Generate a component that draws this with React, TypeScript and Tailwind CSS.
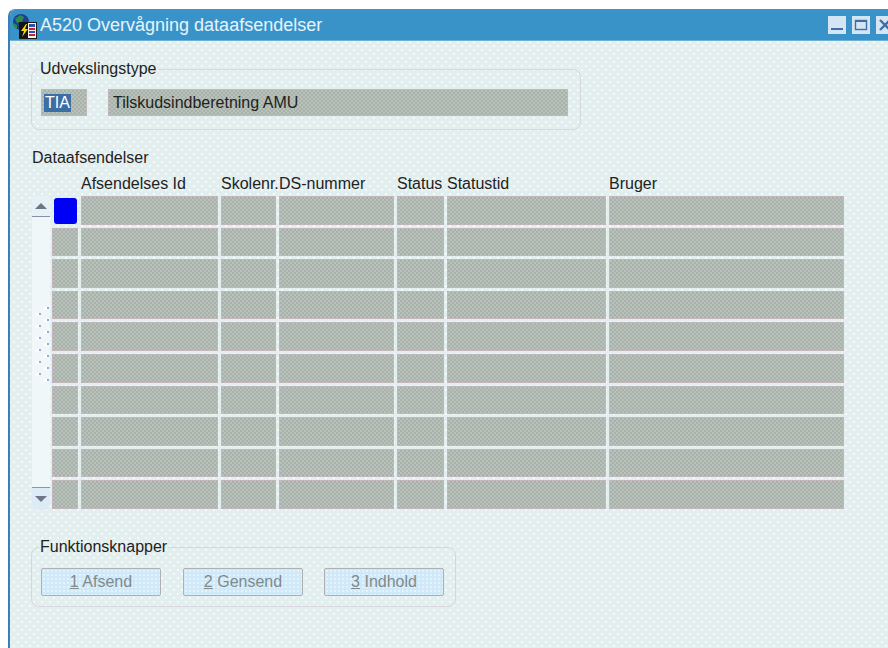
import React from 'react';

const ROWS = Array.from({ length: 10 }, (_, i) => i);
const COLS = [0, 1, 2, 3, 4, 5, 6];

const HEADERS = [
  { label: 'Afsendelses Id', col: 'col-start-2' },
  { label: 'Skolenr.', col: 'col-start-3' },
  { label: 'DS-nummer', col: 'col-start-4' },
  { label: 'Status', col: 'col-start-5' },
  { label: 'Statustid', col: 'col-start-6' },
  { label: 'Bruger', col: 'col-start-7' },
];

const BUTTONS = [
  { key: '1', label: ' Afsend' },
  { key: '2', label: ' Gensend' },
  { key: '3', label: ' Indhold' },
];

const gridCols = 'grid grid-cols-[26px_137px_55px_115px_47px_159px_235px] gap-x-[3px]';
const cellBg =
  'border border-[#c0b6bc] bg-[#b0b9b3] bg-[repeating-conic-gradient(#a6b2b0_0_25%,#bbc1b4_0_50%)] bg-[length:4px_4px]';
const groupBox = 'rounded-[8px] border border-[#d6d6dc]';

function AppIcon() {
  return (
    <svg width="25" height="25" viewBox="0 0 25 25" className="shrink-0 mt-[2px]">
      <circle cx="9" cy="8" r="8" fill="#1c3f8f" />
      <path d="M3 5 L8 1 L12 3 L10 8 L5 9 Z" fill="#2f8a4a" />
      <path d="M1 9 L5 11 L5 15 L2 13 Z" fill="#2f8a4a" />
      <rect x="7.5" y="8.5" width="17" height="16" fill="#f4f4f4" stroke="#1a1a1a" />
      <rect x="7" y="8" width="9" height="16" fill="#141414" />
      <rect x="17" y="10" width="6" height="3" fill="#2a50b0" />
      <rect x="17" y="14" width="6" height="2" fill="#c8202a" />
      <rect x="17" y="17" width="6" height="2" fill="#2a50b0" />
      <rect x="17" y="20" width="6" height="2" fill="#c8202a" />
      <path d="M14 10 L9 17 L12 17 L10 23 L16 15 L13 15 L15 10 Z" fill="#f6d80e" />
    </svg>
  );
}

function WindowButton({ children }: { children: React.ReactNode }) {
  return (
    <div className="w-[18px] h-[18px] shrink-0 bg-[#d4e6f4] flex items-center justify-center">
      <svg width="14" height="14" viewBox="0 0 14 14">
        {children}
      </svg>
    </div>
  );
}

function ScrollGrip() {
  const right = [0, 12, 24, 36, 48, 60, 72];
  const left = [6, 18, 30, 42, 54, 66];
  const pair = (x: number, y: number) => (
    <g key={`${x}-${y}`}>
      <rect x={x - 1} y={y + 1} width="3" height="3" fill="#fff" />
      <rect x={x + 2} y={y + 1} width="2" height="2" fill="#9fa5e2" />
    </g>
  );
  return (
    <svg width="18" height="80" viewBox="0 0 18 80">
      {right.map((y) => pair(13, y))}
      {left.map((y) => pair(5, y))}
    </svg>
  );
}

export default function App() {
  return (
    <div className="w-[888px] h-[648px] overflow-hidden bg-white pt-[9px] pl-[8px] font-['Liberation_Sans',Arial,sans-serif] text-[16px] leading-[18px] text-[#222]">
      <div className="w-[900px] h-[639px] flex flex-col rounded-tl-[7px] overflow-hidden border-l-2 border-t border-l-[#3b7fb8] border-t-[#7480b4] bg-[#e3eeef] bg-[radial-gradient(circle,#f4fafa_0.9px,transparent_1.1px),radial-gradient(circle,#f4fafa_0.9px,transparent_1.1px)] bg-[length:8px_8px] bg-[position:0_0,4px_4px]">
        {/* title bar */}
        <div className="h-[31px] shrink-0 flex items-center bg-[#3a93c8] border-b border-[#6fb0d6] pr-[14px]">
          <div className="ml-[2px] flex items-center gap-[3px] flex-1">
            <AppIcon />
            <span className="text-[18px] text-[#e6f4fb]">A520 Overvågning dataafsendelser</span>
          </div>
          <div className="flex gap-[6px]">
            <WindowButton>
              <rect x="1" y="10" width="12" height="2" fill="#3f6fa8" />
            </WindowButton>
            <WindowButton>
              <rect x="1.5" y="2.5" width="11" height="9" fill="none" stroke="#3f6fa8" strokeWidth="1.4" />
              <rect x="1" y="2" width="12" height="2" fill="#3f6fa8" />
            </WindowButton>
            <WindowButton>
              <path d="M2 2 L12 12 M12 2 L2 12" stroke="#3f6fa8" strokeWidth="2.4" />
            </WindowButton>
          </div>
        </div>

        <div className="pl-[21px] pt-[19px] flex flex-col items-start">
          {/* exchange type group */}
          <fieldset className={`${groupBox} w-[550px] pl-[9px] pt-[11px] pb-[13px]`}>
            <legend className="-ml-[2px] px-[1px]">Udvekslingstype</legend>
            <div className="flex gap-[21px]">
              <div className={`${cellBg} w-[46px] h-[27px] flex items-center pl-[2px]`}>
                <span className="bg-[#3a6ea5] text-white px-[1px]">TIA</span>
              </div>
              <div className={`${cellBg} w-[460px] h-[27px] flex items-center pl-[4px]`}>Tilskudsindberetning AMU</div>
            </div>
          </fieldset>

          <div className="mt-[19px] ml-px">Dataafsendelser</div>

          {/* column headers */}
          <div className={`${gridCols} mt-[8px] ml-[21px] h-[21px]`}>
            {HEADERS.map((h) => (
              <span key={h.label} className={`${h.col} whitespace-nowrap`}>
                {h.label}
              </span>
            ))}
          </div>

          <div className="flex ml-px gap-[2px]">
            {/* vertical scrollbar */}
            <div className="w-[18px] h-[314px] flex flex-col bg-[#f0f7f8] rounded-[6px]">
              <div className="h-[21px] shrink-0 flex items-center justify-center border-b border-[#8b8fa8] bg-[#e6f1f6] rounded-t-[6px]">
                <div className="w-0 h-0 border-x-[6px] border-x-transparent border-b-[6px] border-b-[#6f7588]" />
              </div>
              <div className="flex-1 flex items-center justify-center -translate-y-[6px]">
                <ScrollGrip />
              </div>
              <div className="h-[23px] shrink-0 flex items-center justify-center border-t border-[#8b8fc8] bg-[#dcebf6] rounded-b-[6px]">
                <div className="w-0 h-0 border-x-[6px] border-x-transparent border-t-[6px] border-t-[#6f7588]" />
              </div>
            </div>

            {/* data rows */}
            <div className="flex flex-col gap-y-[3px] h-[313px]">
              {ROWS.map((r) => (
                <div key={r} className={`${gridCols} flex-1`}>
                  {COLS.map((c) =>
                    r === 0 && c === 0 ? (
                      <div key={c} className="ml-[2px] mr-px mt-[2px] mb-px bg-[#0000f4] rounded-[3px]" />
                    ) : (
                      <div key={c} className={cellBg} />
                    )
                  )}
                </div>
              ))}
            </div>
          </div>

          {/* function buttons group */}
          <fieldset className={`${groupBox} mt-[28px] w-[425px] pl-[9px] pt-[12px] pb-[10px]`}>
            <legend className="-ml-[2px] px-[1px]">Funktionsknapper</legend>
            <div className="flex gap-[21px]">
              {BUTTONS.map((b) => (
                <button
                  key={b.key}
                  className="w-[120px] h-[28px] first:mr-px border border-[#aeb0b3] rounded-[2px] bg-[#cfe9f9] bg-[radial-gradient(circle,#e4f3fb_0.8px,transparent_1px)] bg-[length:4px_4px] text-[#7f8a8c]"
                >
                  <span className="underline">{b.key}</span>
                  {b.label}
                </button>
              ))}
            </div>
          </fieldset>
        </div>
      </div>
    </div>
  );
}
